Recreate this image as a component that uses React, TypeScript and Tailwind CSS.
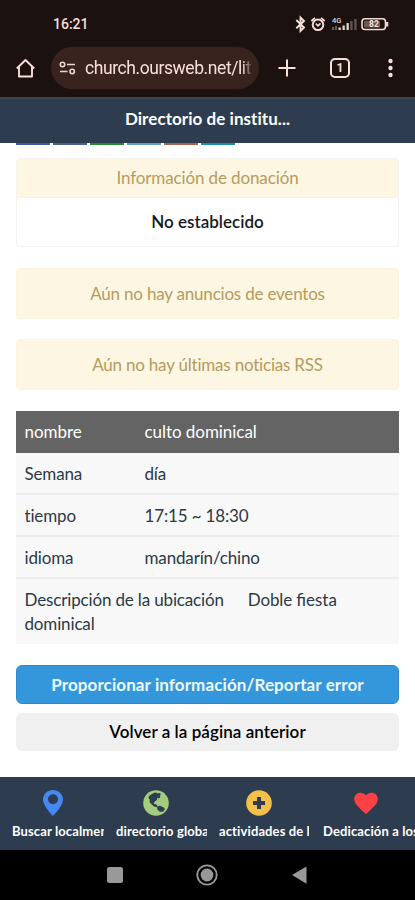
const tiles = [
  "w-[34px] bg-[#3b5998]",
  "w-[34px] bg-[#4a5f8f]",
  "w-[34px] bg-[#258a2b]",
  "w-[34px] bg-[#659cca]",
  "w-[34px] bg-[#a4634e]",
  "w-[34px] bg-[#178fae]",
];

const rows = [
  ["Semana", "día"],
  ["tiempo", "17:15 ~ 18:30"],
  ["idioma", "mandarín/chino"],
];

function StatusBar() {
  return (
    <div className="flex h-[47px] shrink-0 items-center pl-[53px] pr-[26px] font-[Roboto]">
      <span className="text-[14px] font-medium leading-none">16:21</span>
      <svg className="ml-auto" width="94" height="20" viewBox="0 0 94 20" fill="none" stroke="#f5ded9">
        <path d="M1.3 6L9 13.5L5.5 17V3.5L9 7L1.3 14.3" strokeWidth="1.9" />
        <circle cx="23" cy="10.8" r="5.3" strokeWidth="2" />
        <path d="M16.3 7L20 3.8M29.7 7L26 3.8M20.8 9.6L23 11.8L25.5 9.4" strokeWidth="1.7" />
        <text x="37" y="9" fontSize="7.5" fontWeight="500" fill="#e8d2cd" stroke="none">4G</text>
        <g fill="#e8d2cd" stroke="none">
          <path opacity=".4" d="M37 13h2v3h-2zM40 12h2v4h-2z" />
          <path d="M43.5 13.5h2.3V16h-2.3zM47.5 11.5h2.3V16h-2.3zM51.5 9h2.3v7h-2.3z" />
          <path opacity=".35" d="M55.3 7h2.3v9h-2.3zM59.3 5h2.3v11h-2.3z" />
          <path d="M91 8h2.3v4.5H91z" />
        </g>
        <rect x="67" y="4.8" width="23.5" height="10.7" rx="3" strokeWidth="1.6" fill="#1b110e" />
        <rect x="69" y="6.8" width="16" height="6.7" rx="1" fill="#6b5b57" stroke="none" />
        <text x="74" y="13.3" fontSize="8.5" fontWeight="700" fill="#f5ded9" stroke="none">82</text>
      </svg>
    </div>
  );
}

function BrowserBar() {
  return (
    <div className="flex h-[50px] shrink-0 items-start">
      <svg className="ml-4 mt-[11px] shrink-0" width="19" height="20" viewBox="0 0 19 20" fill="none" stroke="#f8dfd9" strokeWidth="1.9" strokeLinejoin="round">
        <path d="M.8 10.5L9.5 2L18.2 10.5M3 9v9.5h13V9" />
      </svg>
      <div className="ml-[16px] flex h-[42px] w-[208px] shrink-0 items-center overflow-hidden rounded-full bg-[#38231e] pl-[8px] pr-[6px]">
        <svg className="shrink-0" width="17" height="14" viewBox="0 0 17 14" fill="none" stroke="#eed5cf" strokeWidth="1.6">
          <circle cx="3.5" cy="3.5" r="2.2" />
          <circle cx="13.2" cy="10.5" r="2.2" />
          <path d="M8 3.5h8M1 10.5h7.5" />
        </svg>
        <span className="ml-[9px] w-[166px] overflow-hidden whitespace-nowrap font-[Roboto] text-[17.5px] leading-6 tracking-[-0.42px] [mask-image:linear-gradient(to_right,#000_157px,transparent_168px)]">
          church.oursweb.net/lit
        </span>
      </div>
      <svg className="ml-[19px] mt-3 shrink-0" width="18" height="18" viewBox="0 0 18 18" stroke="#f8dfd9" strokeWidth="2">
        <path d="M9 .5v17M.5 9h17" />
      </svg>
      <div className="ml-[34px] mt-[11px] flex size-5 shrink-0 items-center justify-center rounded-[5px] border-2 border-[#f8dfd9] font-[Roboto] text-[12px] font-bold">1</div>
      <svg className="ml-[38px] mt-[11px] shrink-0" width="5" height="20" viewBox="0 0 5 20" fill="#f8dfd9">
        <circle cx="2.5" cy="3" r="2.2" />
        <circle cx="2.5" cy="10" r="2.2" />
        <circle cx="2.5" cy="17" r="2.2" />
      </svg>
    </div>
  );
}

function BottomTabs() {
  return (
    <nav className="flex h-[73px] shrink-0 overflow-hidden bg-[#2d3d4f] pl-3 text-[13px] font-bold tracking-[0.12px] text-white">
      <div className="mr-[12px] flex w-[92px] shrink-0 flex-col pt-[12px]">
        <svg className="ml-[31px]" width="20" height="28" viewBox="0 0 20 28" fill="#4588f4">
          <path fillRule="evenodd" d="M10 1C4.5 1 0 5.1 0 10.5C0 17 10 27 10 27S20 17 20 10.5C20 5.1 15.5 1 10 1ZM10 5.2a5 5 0 1 0 0 10a5 5 0 0 0 0-10Z" />
        </svg>
        <span className="mt-[4px] overflow-hidden whitespace-nowrap leading-5">Buscar localmente</span>
      </div>
      <div className="mr-[12px] flex w-[91px] shrink-0 flex-col pt-[12px]">
        <svg className="ml-[27px]" width="26" height="28" viewBox="0 0 26 28" fill="#2d3d4f">
          <circle cx="13" cy="14" r="12.8" fill="#a5cb7c" />
          <path d="M6 7.2C8 5 10.5 3.6 13.2 3.4L14.5 4.6L16.5 4L18 5.2L16.6 6.7L17.6 8L15.8 9.4L14.2 8.8L14 11L11.8 12.6L10.6 14.8L12.8 15.2L14.5 16.8L13.6 18.3L11.2 17.6L8.7 15.6L6.6 13.2L6.8 10.4L5.4 9Z" />
          <path d="M14 17.6L17 16.8L20.8 18.4L22 20.2L20 22.8L16.8 22.7L14.4 20.6Z" />
        </svg>
        <span className="mt-[4px] overflow-hidden whitespace-nowrap leading-5">directorio global</span>
      </div>
      <div className="mr-[14px] flex w-[90px] shrink-0 flex-col pt-[12px]">
        <svg className="ml-[27px]" width="26" height="28" viewBox="0 0 26 28">
          <circle cx="13" cy="14" r="12.8" fill="#f5c04a" />
          <path d="M11 8h4v4h4v4h-4v4h-4v-4H7v-4h4z" fill="#2d3d4f" />
        </svg>
        <span className="mt-[4px] overflow-hidden whitespace-nowrap leading-5">actividades de la</span>
      </div>
      <div className="flex w-[92px] shrink-0 flex-col pt-[12px]">
        <svg className="ml-[30px]" width="26" height="28" viewBox="0 0 26 28" fill="#fc4144">
          <path d="M13 25L11.2 23.4C5 17.8 1.2 14.4 1.2 10C1.2 6.5 4 3.8 7.4 3.8C9.6 3.8 11.7 4.9 13 6.5C14.3 4.9 16.4 3.8 18.6 3.8C22 3.8 24.8 6.5 24.8 10C24.8 14.4 21 17.8 14.8 23.4Z" />
        </svg>
        <span className="mt-[4px] whitespace-nowrap leading-5">Dedicación a los</span>
      </div>
    </nav>
  );
}

export default function App() {
  return (
    <div className="flex h-[900px] w-[415px] flex-col overflow-hidden bg-[#1b110e] font-[Lato,sans-serif] text-[#f8dfd9]">
      <StatusBar />
      <BrowserBar />
      <header className="flex h-[46px] shrink-0 items-center justify-center border-t-2 border-[#3c454c] bg-[#2d3d4f] pb-[5px] text-[17px] font-bold tracking-[0.05px] text-white">Directorio de institu...</header>
      <main className="flex h-[634px] shrink-0 flex-col bg-white px-4 text-[17px] tracking-[-0.15px] text-[#2c3947]">
        <div className="flex h-[2px] gap-[3px]">
          {tiles.map((tile) => <div key={tile} className={tile} />)}
        </div>
        <section className="mt-[13px] h-[89px] overflow-hidden rounded border border-[#f4f3ed] text-center">
          <h2 className="flex h-[39px] items-center justify-center border-b border-[#faf1da] bg-[#fdf6e3] tracking-[-0.12px] text-[#b59b5c]">Información de donación</h2>
          <p className="flex h-[48px] items-center justify-center font-semibold tracking-[0.02px] text-[#141922]">No establecido</p>
        </section>
        <div className="mt-[21px] flex h-[51px] items-center justify-center rounded border border-[#fbf3df] bg-[#fdf6e3] tracking-[-0.2px] text-[#b59b5c]">Aún no hay anuncios de eventos</div>
        <div className="mt-5 flex h-[51px] items-center justify-center rounded border border-[#fbf3df] bg-[#fdf6e3] tracking-[-0.2px] text-[#b59b5c]">Aún no hay últimas noticias RSS</div>
        <section className="mt-[21px] h-[233px] bg-[#f8f8f8]">
          <div className="flex h-[42px] items-center bg-[#646464] px-[8.5px] tracking-[-0.05px] text-white"><span className="w-[120px]">nombre</span><span>culto dominical</span></div>
          {rows.map(([label, value]) => (
            <div key={label} className="flex h-[42px] items-center border-b-2 border-[#ececec] px-[8.5px] pt-[2px]"><span className="w-[120px]">{label}</span><span>{value}</span></div>
          ))}
          <p className="px-[8.5px] pt-[9px] leading-6"><span className="mr-6">Descripción de la ubicación</span>Doble <span className="tracking-normal">fiesta</span><br />dominical</p>
        </section>
        <button className="mt-[21px] h-[39px] shrink-0 rounded-md border border-[#3088c8] bg-[#3597db] font-bold tracking-[0.1px] text-[#ecfbff]">Proporcionar información/Reportar error</button>
        <button className="mt-[9px] h-[38px] shrink-0 rounded-md bg-[#f0f0f0] font-semibold tracking-[0.06px] text-black">Volver a la página anterior</button>
      </main>
      <BottomTabs />
      <div className="flex h-[50px] shrink-0 items-center bg-black">
        <svg width="415" height="50" viewBox="0 0 415 50">
          <rect x="107" y="17" width="16" height="16" rx="2.5" fill="#999" />
          <circle cx="207" cy="25" r="9.7" fill="none" stroke="#999" strokeWidth="1.8" />
          <circle cx="207" cy="25" r="6.4" fill="#999" />
          <path d="M292 25L306.5 16.5V33.8Z" fill="#999" />
        </svg>
      </div>
    </div>
  );
}
